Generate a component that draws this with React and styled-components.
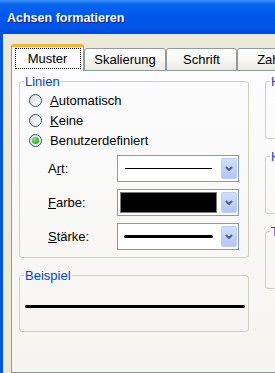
import styled, { createGlobalStyle } from 'styled-components'

const GlobalStyle = createGlobalStyle`
  html, body {
    margin: 0;
    padding: 0;
    overflow: hidden;
  }
  body {
    font-family: "Liberation Sans", Arial, sans-serif;
    font-size: 13px;
    color: #000;
  }
`

const Window = styled.div`
    width: 275px;
    height: 373px;
    display: flex;
    flex-direction: column;
    background: #0054E3;
    overflow: hidden;
`

const TitleBar = styled.div`
    height: 34px;
    flex-shrink: 0;
    box-sizing: border-box;
    display: flex;
    align-items: center;
    padding: 2px 0 0 7px;
    background: linear-gradient(180deg, #3D95FF 0%, #0A66F0 12%, #0058EE 45%, #0055E8 80%, #0049D0 100%);
    color: #fff;
    font-weight: bold;
    font-size: 12.5px;
    text-shadow: 1px 1px 0 #0A1883;
`

const Body = styled.div`
    flex: 1;
    min-height: 0;
    margin-left: 3px;
    background: #ECE9D8;
    padding: 10px 0 0 8px;
    display: flex;
    flex-direction: column;
`

const TabRow = styled.div`
    display: flex;
    align-items: flex-end;
    height: 27px;
    margin-bottom: -1px;
    position: relative;
    z-index: 1;
`

const Tab = styled.div`
    flex-shrink: 0;
    box-sizing: border-box;
    width: ${p => p.$w}px;
    height: ${p => (p.$active ? 27 : 23)}px;
    border: 1px solid #919B9C;
    border-bottom: ${p => (p.$active ? 'none' : '1px solid #919B9C')};
    border-top: ${p => (p.$active ? '3px solid #F4B534' : '1px solid #919B9C')};
    border-radius: 3px 3px 0 0;
    background: ${p => (p.$active
        ? '#FCFCFE'
        : 'linear-gradient(180deg, #FFFFFF 0%, #F7F7F4 50%, #E9E8E1 100%)')};
    display: flex;
    align-items: center;
    justify-content: center;
    padding-bottom: ${p => (p.$active ? 1 : 0)}px;
`

const TabLabel = styled.span`
    padding: 2px 11px;
    line-height: 15px;
    border: 1px dotted ${p => (p.$focus ? '#000' : 'transparent')};
    ${p => p.$focus && 'width: 64px; text-align: center; padding: 2px 0;'}
`

const Panel = styled.div`
    flex: 1;
    width: 400px;
    box-sizing: border-box;
    border: 1px solid #919B9C;
    background: linear-gradient(180deg, #FCFCFE 0%, #F5F4EF 100%);
    padding: 3px 0 0 7px;
    display: flex;
    gap: 16px;
    align-items: flex-start;
`

const Column = styled.div`
    width: ${p => p.$w}px;
    flex-shrink: 0;
    display: flex;
    flex-direction: column;
    gap: 10px;
`

const Group = styled.fieldset`
    margin: 0;
    padding: 0;
    min-width: 0;
    border: 1px solid #D0D0BF;
    border-radius: 3px;
`

const Legend = styled.legend`
    color: #0046D5;
    margin-left: 4px;
    padding: 0 1px;
    line-height: 15px;
    white-space: nowrap;
`

const GroupBody = styled.div`
    box-sizing: border-box;
    height: ${p => p.$h}px;
    padding: ${p => p.$pad};
    display: flex;
    flex-direction: column;
`

const RadioRow = styled.label`
    height: 20px;
    display: flex;
    align-items: center;
    gap: 8px;
`

const RadioCircle = styled.span`
    width: 13px;
    height: 13px;
    box-sizing: border-box;
    border-radius: 50%;
    border: 1px solid #1C5180;
    background: linear-gradient(135deg, #DCD9CD 0%, #F4F3EE 60%, #FFFFFF 100%);
    display: flex;
    align-items: center;
    justify-content: center;
`

const RadioDot = styled.span`
    width: 7px;
    height: 7px;
    border-radius: 50%;
    background: radial-gradient(circle at 35% 35%, #8AF07A 0%, #3CC53A 45%, #179A17 100%);
`

const FieldList = styled.div`
    margin-top: 5px;
    display: flex;
    flex-direction: column;
    gap: 7px;
`

const FieldRow = styled.div`
    height: 27px;
    display: flex;
    align-items: center;
`

const FieldLabel = styled.span`
    width: 69px;
    margin-left: 19px;
    flex-shrink: 0;
`

const Combo = styled.div`
    width: 122px;
    height: 27px;
    box-sizing: border-box;
    border: 1px solid #7F9DB9;
    background: #fff;
    padding: 2px 1px 2px 2px;
    display: flex;
    align-items: stretch;
`

const Preview = styled.div`
    flex: 1;
    display: flex;
    align-items: center;
    padding: ${p => p.$pad};
`

const Stroke = styled.div`
    flex: 1;
    height: ${p => p.$size}px;
    background: #000;
    border-radius: ${p => p.$size / 2}px;
`

const Swatch = styled.div`
    flex: 1;
    align-self: stretch;
    background: #000;
    border: 1px solid #7A7A7A;
`

const DropButton = styled.div`
    width: 16px;
    flex-shrink: 0;
    box-sizing: border-box;
    border: 1px solid #BFCDF4;
    border-radius: 2px;
    background: linear-gradient(180deg, #D2DEFC 0%, #C0D1FA 50%, #B3C6F6 100%);
    display: flex;
    align-items: center;
    justify-content: center;
`

const SampleLine = styled.div`
    height: 3px;
    background: #000;
    border-radius: 2px;
`

function Chevron() {
    return (
        <svg width="8" height="5" viewBox="0 0 8 5">
            <polyline points="1,1 4,4 7,1" fill="none" stroke="#4D6185" strokeWidth="2" />
        </svg>
    )
}

function Radio({ checked, children }) {
    return (
        <RadioRow>
            <RadioCircle>{checked ? <RadioDot /> : null}</RadioCircle>
            <span>{children}</span>
        </RadioRow>
    )
}

function Field({ label, children }) {
    return (
        <FieldRow>
            <FieldLabel>{label}</FieldLabel>
            <Combo>
                {children}
                <DropButton><Chevron /></DropButton>
            </Combo>
        </FieldRow>
    )
}

const tabs = [
    { name: 'Muster', w: 73 },
    { name: 'Skalierung', w: 82 },
    { name: 'Schrift', w: 71 },
    { name: 'Zahlen', w: 80 },
]

function App() {
    return (
        <Window>
            <GlobalStyle />
            <TitleBar>Achsen formatieren</TitleBar>
            <Body>
                <TabRow>
                    {tabs.map((t, i) => (
                        <Tab key={t.name} $w={t.w} $active={i === 0}>
                            <TabLabel $focus={i === 0}>{t.name}</TabLabel>
                        </Tab>
                    ))}
                </TabRow>
                <Panel>
                    <Column $w={230}>
                        <Group>
                            <Legend>Linien</Legend>
                            <GroupBody $h={168} $pad="1px 9px 6px 9px">
                                <Radio><u>A</u>utomatisch</Radio>
                                <Radio><u>K</u>eine</Radio>
                                <Radio checked>Benutzerdefiniert</Radio>
                                <FieldList>
                                    <Field label={<>A<u>r</u>t:</>}>
                                        <Preview $pad="0 9px 0 5px"><Stroke $size={1} /></Preview>
                                    </Field>
                                    <Field label={<><u>F</u>arbe:</>}>
                                        <Preview $pad="0 4px 0 0"><Swatch /></Preview>
                                    </Field>
                                    <Field label={<><u>S</u>tärke:</>}>
                                        <Preview $pad="0 8px 0 4px"><Stroke $size={3} /></Preview>
                                    </Field>
                                </FieldList>
                            </GroupBody>
                        </Group>
                        <Group>
                            <Legend>Beispiel</Legend>
                            <GroupBody $h={48} $pad="22px 3px 0 5px">
                                <SampleLine />
                            </GroupBody>
                        </Group>
                    </Column>
                    <Column $w={200}>
                        <Group>
                            <Legend>Hauptstriche</Legend>
                            <GroupBody $h={49} $pad="0" />
                        </Group>
                        <Group>
                            <Legend>Hilfsstriche</Legend>
                            <GroupBody $h={49} $pad="0" />
                        </Group>
                        <Group>
                            <Legend>Teilstrichbeschriftungen</Legend>
                            <GroupBody $h={49} $pad="0" />
                        </Group>
                    </Column>
                </Panel>
            </Body>
        </Window>
    )
}

export default App
